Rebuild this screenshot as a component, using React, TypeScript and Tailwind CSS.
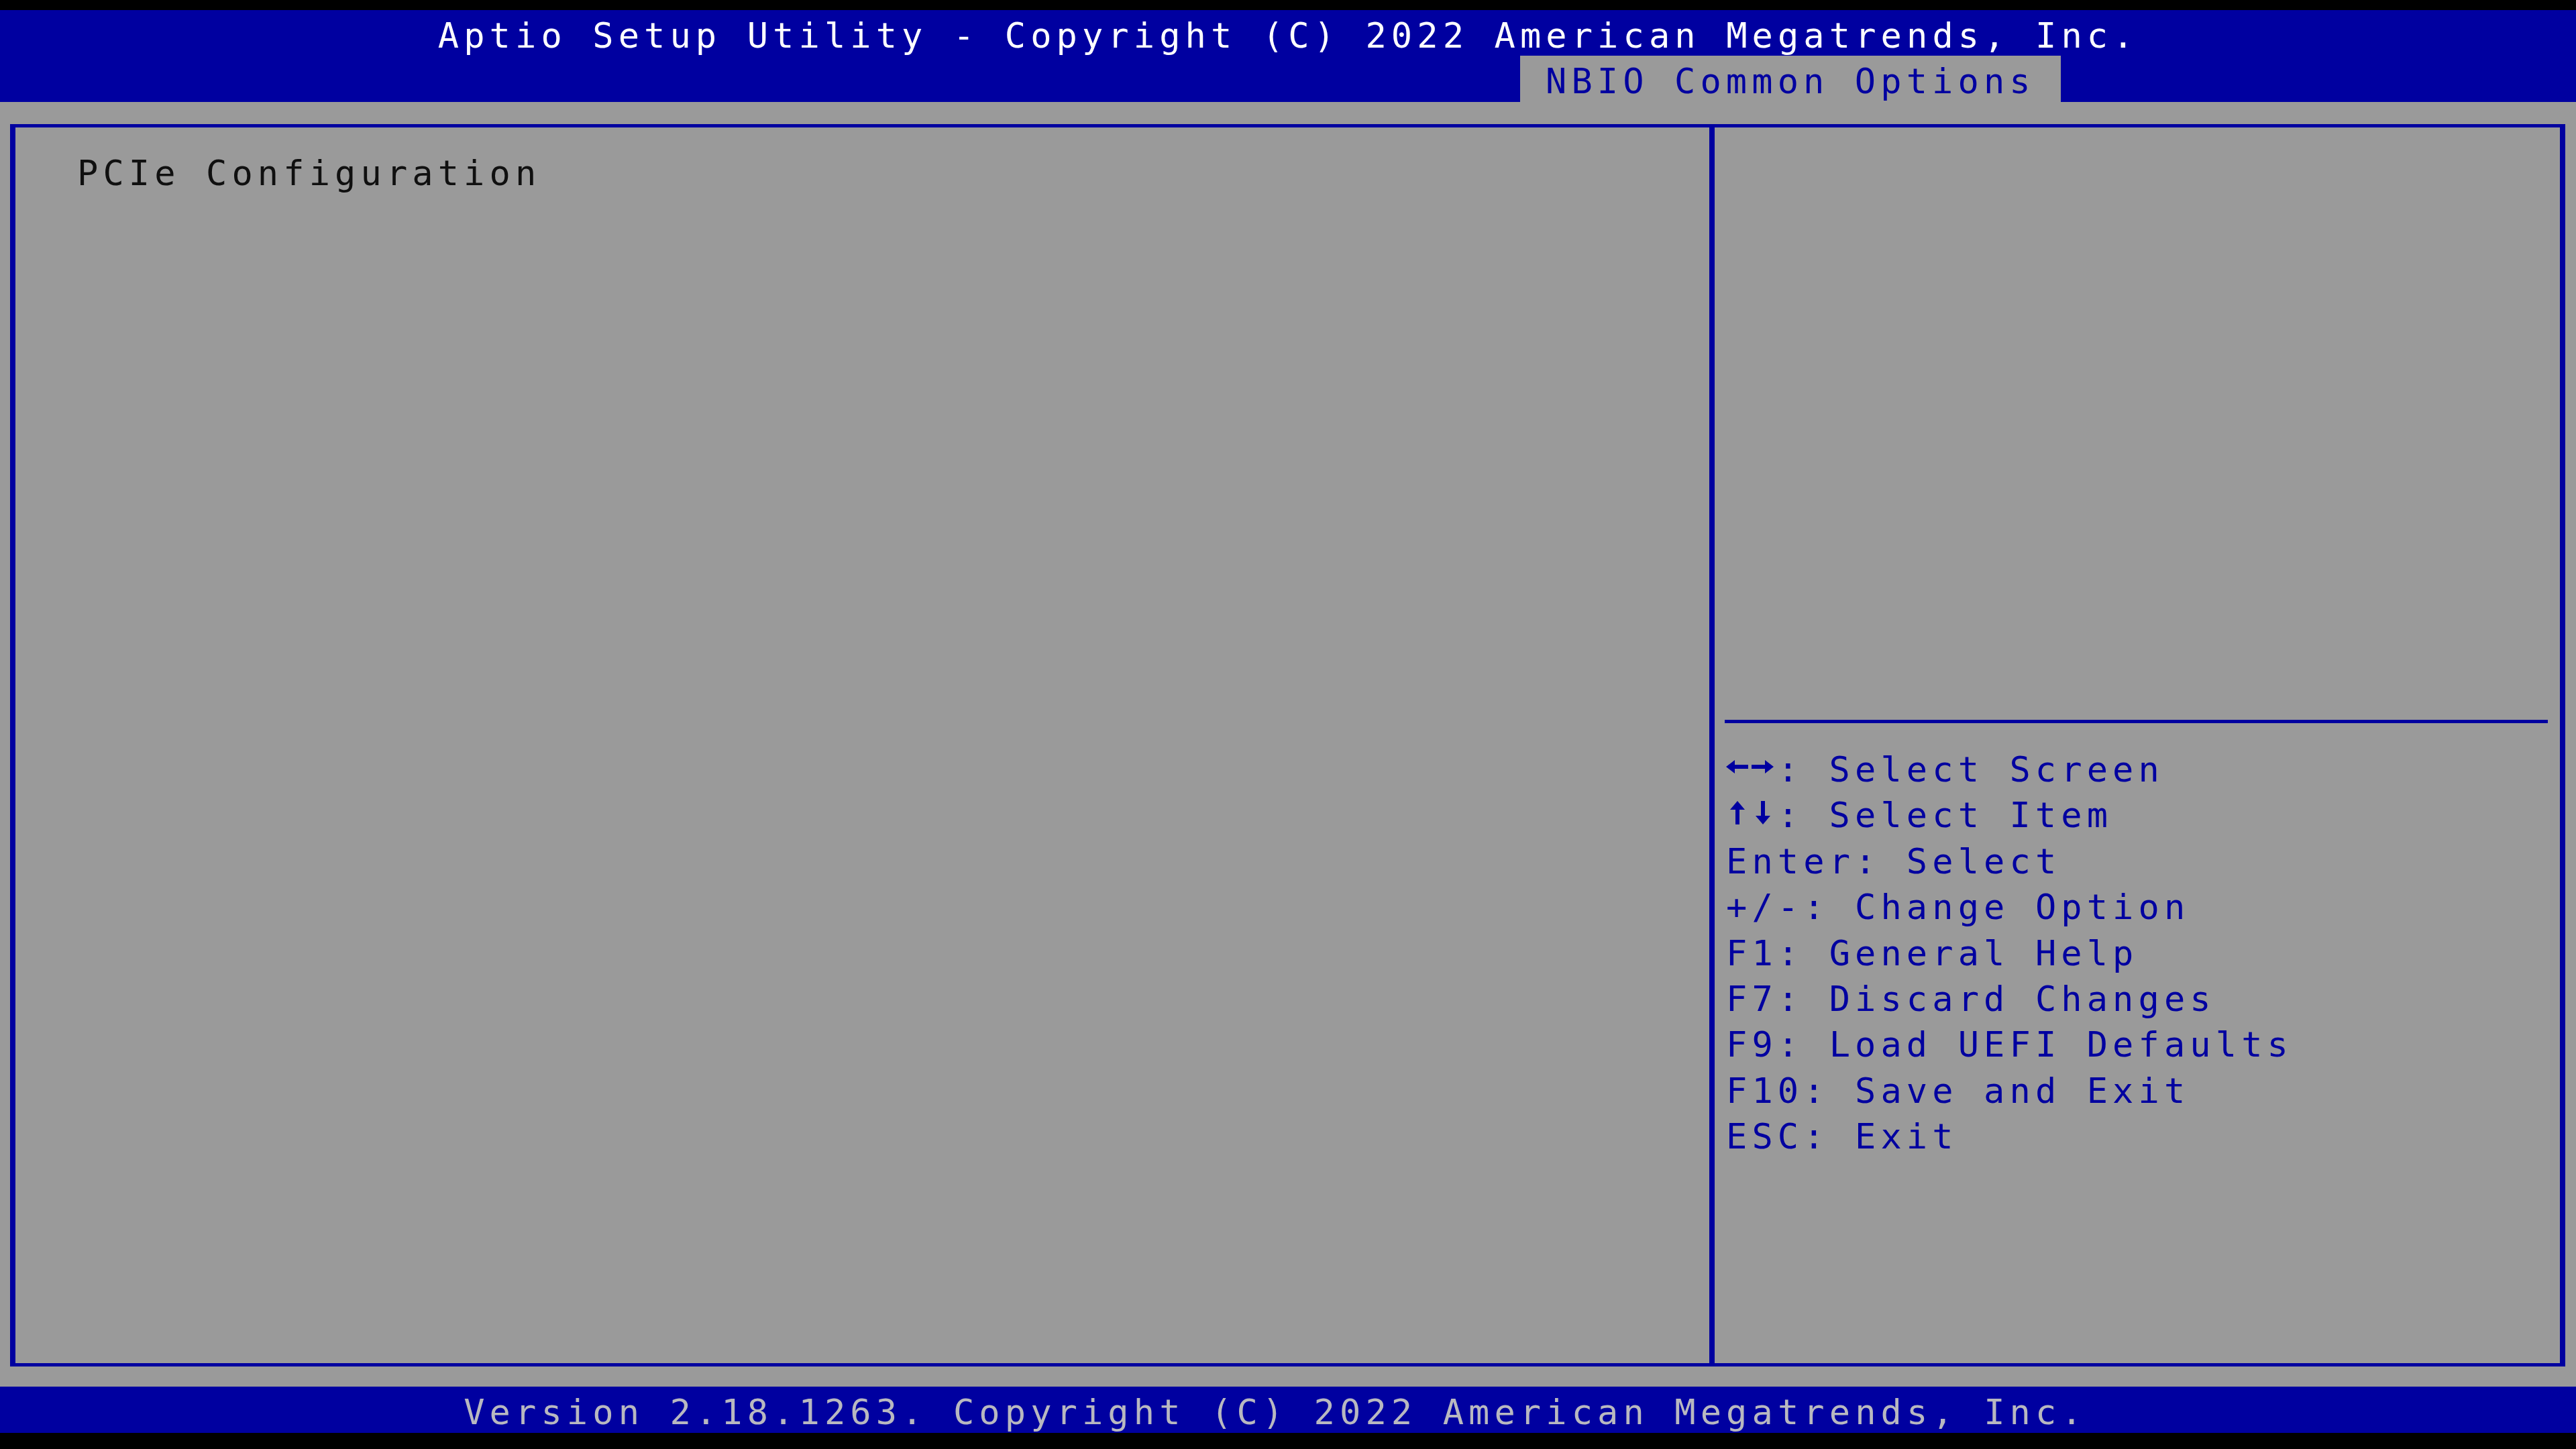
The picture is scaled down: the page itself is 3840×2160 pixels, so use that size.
// small arrow glyphs for the key legend, one text cell each (38.4 x 68.4)
function ArrowCell({ dir }: { dir: "left" | "right" | "up" | "down" }) {
  return (
    <svg viewBox="0 0 38.4 68.4" className="inline-block align-top w-[38.4px] h-[68.4px]" fill="#0000a0">
      {dir === "left" && (
        <>
          <polygon points="0,34 13,24 13,44" />
          <rect x="11" y="31" width="22" height="6" />
        </>
      )}
      {dir === "right" && (
        <>
          <rect x="0" y="31" width="22" height="6" />
          <polygon points="33,34 20,24 20,44" />
        </>
      )}
      {dir === "up" && (
        <>
          <polygon points="17,17 6,30 28,30" />
          <rect x="14" y="28" width="6" height="24" />
        </>
      )}
      {dir === "down" && (
        <>
          <rect x="14" y="17" width="6" height="24" />
          <polygon points="17,52 6,39 28,39" />
        </>
      )}
    </svg>
  );
}

const helpLines = [
  "Enter: Select",
  "+/-: Change Option",
  "F1: General Help",
  "F7: Discard Changes",
  "F9: Load UEFI Defaults",
  "F10: Save and Exit",
  "ESC: Exit",
];

function HelpPanel() {
  return (
    <div className="flex-1 flex flex-col pl-[15px] pr-[18px]">
      <div className="mt-[883px] h-[5px] bg-[#0000a0]" />
      <div className="mt-[31px] pl-[2px] flex flex-col text-[#0000a0]">
        <div className="h-[68.4px] whitespace-pre">
          <ArrowCell dir="left" />
          <ArrowCell dir="right" />
          : Select Screen
        </div>
        <div className="h-[68.4px] whitespace-pre">
          <ArrowCell dir="up" />
          <ArrowCell dir="down" />
          : Select Item
        </div>
        {helpLines.map((line) => (
          <div key={line} className="h-[68.4px] whitespace-pre">
            {line}
          </div>
        ))}
      </div>
    </div>
  );
}

export default function App() {
  return (
    <div className="w-[3840px] h-[2160px] bg-black pt-[15px] flex flex-col font-['DejaVu_Sans_Mono','Liberation_Mono',monospace] text-[52px] leading-[76px] tracking-[7.1px]">
      {/* title bar + tab strip */}
      <header className="h-[137px] bg-[#0000a0] flex flex-col">
        <div className="h-[68.4px] pl-[652.8px] text-white whitespace-pre">
          Aptio Setup Utility - Copyright (C) 2022 American Megatrends, Inc.
        </div>
        <div className="h-[68.6px] pl-[2265.6px] flex">
          <div className="px-[38.4px] bg-[#9a9a9a] text-[#0000a0] whitespace-pre">
            NBIO Common Options
          </div>
        </div>
      </header>

      {/* main area */}
      <main className="h-[1915px] bg-[#9a9a9a] pt-[33px] pl-[15px] pr-[16px] pb-[30px] flex flex-col">
        <div className="flex-1 flex border-x-[8px] border-y-[5px] border-[#0000a0]">
          <div className="w-[2525px] pt-[30px] pl-[92px] text-[#101010] whitespace-pre">
            PCIe Configuration
          </div>
          <div className="w-[8px] bg-[#0000a0]" />
          <HelpPanel />
        </div>
      </main>

      {/* status line */}
      <footer className="h-[69px] bg-[#0000a0] pl-[691.2px] text-[#b8b8c0] whitespace-pre">
        Version 2.18.1263. Copyright (C) 2022 American Megatrends, Inc.
      </footer>
    </div>
  );
}
